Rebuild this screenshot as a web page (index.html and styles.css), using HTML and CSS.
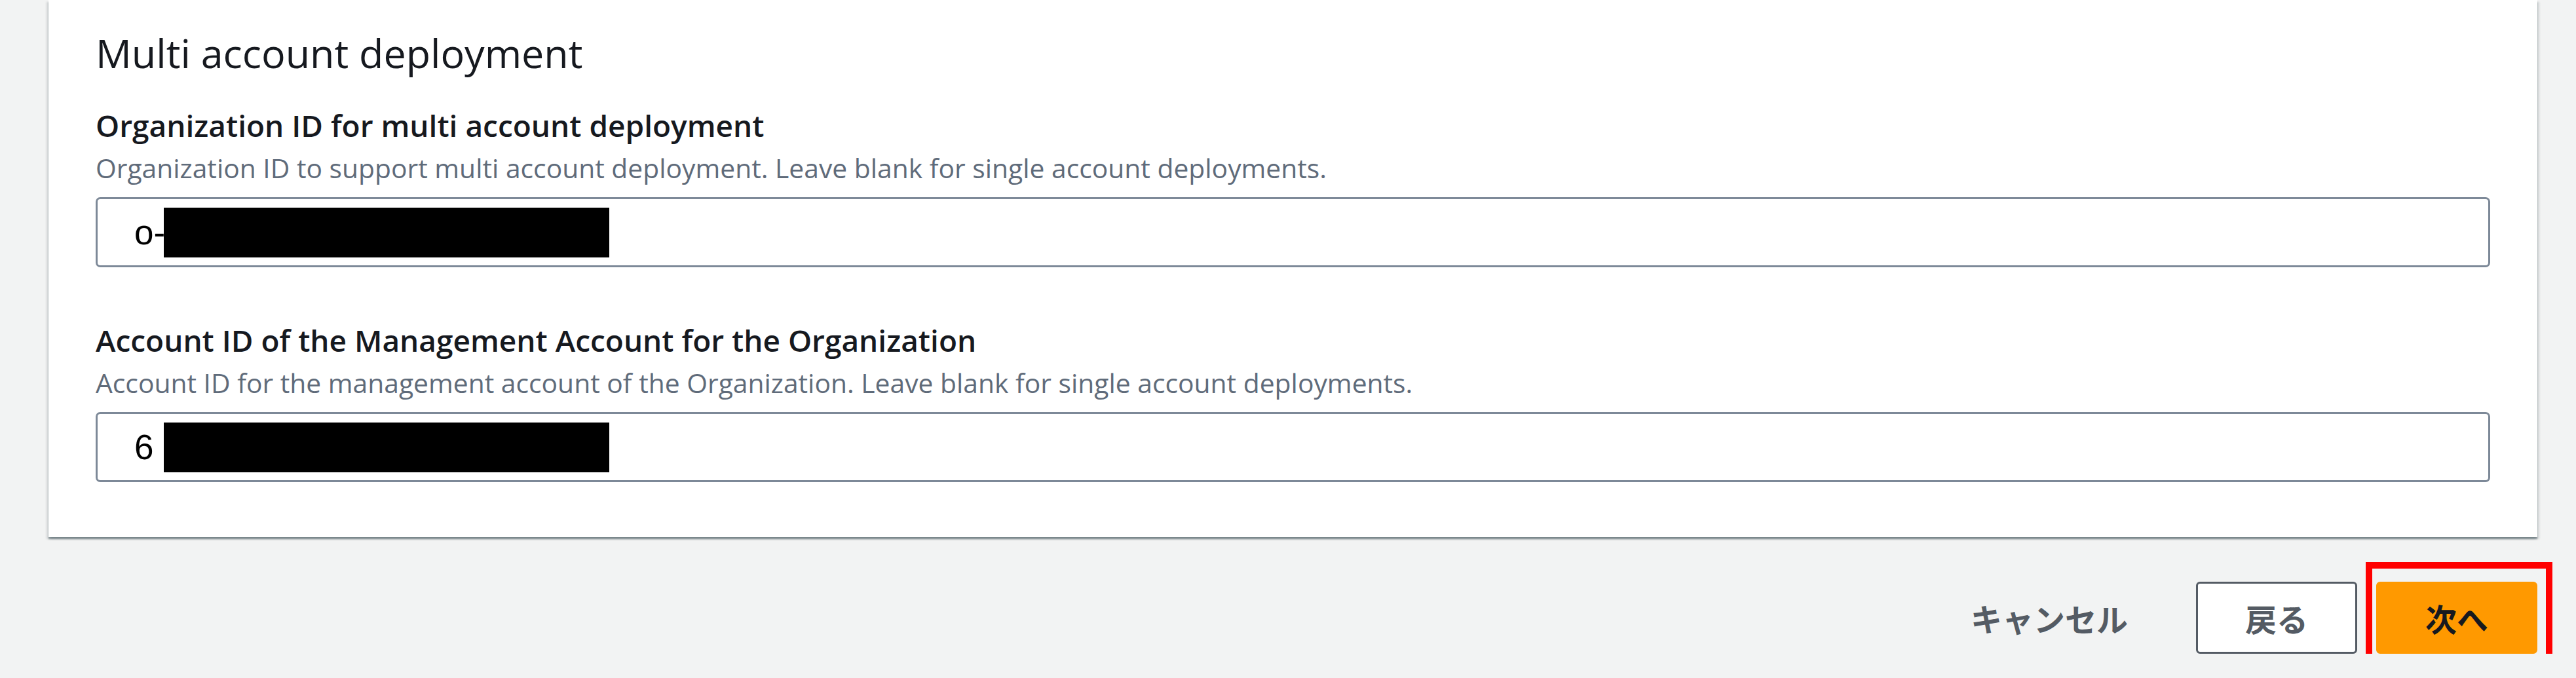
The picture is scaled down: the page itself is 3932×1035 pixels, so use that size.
FILE: index.html
```html
<!DOCTYPE html>
<html lang="ja">
<head>
<meta charset="utf-8">
<title>Multi account deployment</title>
<link rel="stylesheet" href="styles.css">
</head>
<body>
<div class="page">
  <section class="card">
    <h2 class="title">Multi account deployment</h2>
    <div class="field">
      <div class="label">Organization ID for multi account deployment</div>
      <div class="desc">Organization ID to support multi account deployment. Leave blank for single account deployments.</div>
      <div class="input"><span class="val">o-</span><span class="redact redact-org"></span></div>
    </div>
    <div class="field">
      <div class="label">Account ID of the Management Account for the Organization</div>
      <div class="desc">Account ID for the management account of the Organization. Leave blank for single account deployments.</div>
      <div class="input"><span class="val">6</span><span class="redact redact-acct"></span></div>
    </div>
  </section>
  <div class="footer">
    <button class="btn btn-link">キャンセル</button>
    <button class="btn btn-normal">戻る</button>
    <div class="primary-wrap">
      <button class="btn btn-primary">次へ</button>
      <span class="highlight"></span>
    </div>
  </div>
</div>
</body>
</html>
```

FILE: styles.css
```css
html, body {
  margin: 0;
  padding: 0;
  background: #f2f3f3;
  font-family: "Open Sans", "Noto Sans CJK JP", sans-serif;
  color: #16191f;
}

.page {
  padding: 0 59px 0 74px;
}

.card {
  background: #ffffff;
  padding: 39px 72px 84px;
  box-shadow: 0 3px 2px 0 rgba(0, 28, 36, 0.35),
              3px 3px 3px 0 rgba(0, 28, 36, 0.12),
              -3px 3px 3px 0 rgba(0, 28, 36, 0.12);
}

.title {
  margin: 0 0 38px;
  font-size: 61px;
  line-height: 84px;
  font-weight: 400;
  color: #16191f;
}

.field + .field {
  margin-top: 81px;
}

.label {
  font-size: 46px;
  line-height: 60px;
  font-weight: 600;
  color: #16191f;
}

.desc {
  margin-top: 9px;
  font-size: 40.8px;
  line-height: 52px;
  font-weight: 400;
  color: #5f6b7a;
}

.input {
  margin-top: 19px;
  box-sizing: border-box;
  height: 107px;
  border: 3px solid #7d8998;
  border-radius: 7px;
  background: #ffffff;
  padding-left: 56px;
  display: flex;
  align-items: center;
}

.val {
  font-family: "Liberation Sans", Arial, sans-serif;
  font-size: 53px;
  color: #000000;
}

.redact {
  display: inline-block;
  width: 680px;
  height: 76px;
  background: #000000;
}

.redact-org {
  margin-left: -2px;
}

.redact-acct {
  margin-left: 16px;
}

.footer {
  margin-top: 68px;
  display: flex;
  justify-content: flex-end;
  align-items: center;
  gap: 29px;
}

.btn {
  box-sizing: border-box;
  height: 110px;
  margin: 0;
  padding: 0 72px;
  border: 3px solid transparent;
  border-radius: 6px;
  font-family: "Noto Sans CJK JP", "Open Sans", sans-serif;
  font-size: 48px;
  font-weight: 700;
  display: flex;
  align-items: center;
  justify-content: center;
  background: transparent;
  cursor: pointer;
}

.btn-link {
  color: #545b64;
}

.btn-normal {
  background: #ffffff;
  border-color: #545b64;
  color: #545b64;
}

.btn-primary {
  background: #ff9900;
  border-color: #ff9900;
  color: #16191f;
}

.primary-wrap {
  position: relative;
  display: flex;
  height: 110px;
}

.highlight {
  position: absolute;
  box-sizing: border-box;
  top: -30px;
  height: 170px;
  left: -16px;
  right: -23px;
  border: 10px solid #ff0000;
  pointer-events: none;
}
```
